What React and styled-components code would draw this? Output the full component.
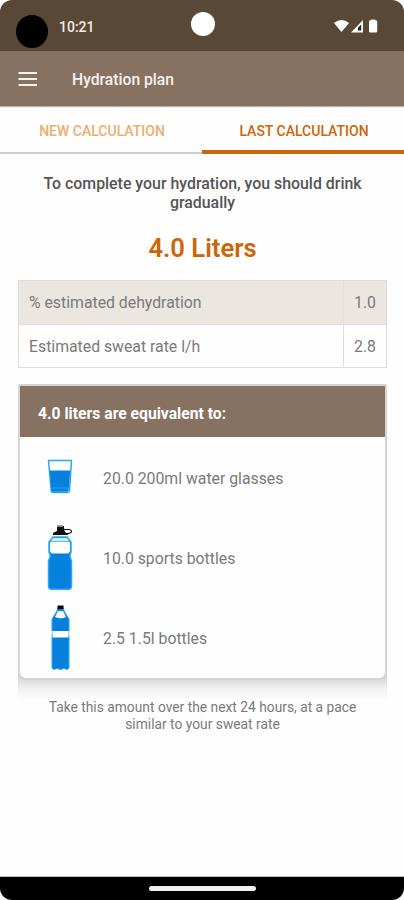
import React from "react";
import styled, { createGlobalStyle } from "styled-components";

const colors = {
  statusBar: "#5a4837",
  primary: "#877160",
  accent: "#cd6509",
  accentLight: "#edae6f",
  text: "#555555",
  textSecondary: "#7a7a7a",
  rowShade: "#ece6e1",
  border: "#dfdddd",
  water: "#0680dc",
  waterEdge: "#25aaf0",
};

const GlobalStyle = createGlobalStyle`
  * {
    box-sizing: border-box;
  }

  body {
    margin: 0;
    background: #ffffff;
    font-family: Roboto, "Liberation Sans", sans-serif;
  }
`;

const Screen = styled.div`
  width: 404px;
  height: 900px;
  display: flex;
  flex-direction: column;
  background: #fefefe;
  border-radius: 12px;
  overflow: hidden;
`;

const StatusBar = styled.div`
  height: 51px;
  flex-shrink: 0;
  display: grid;
  grid-template-columns: 1fr 24px 1fr;
  align-items: start;
  padding: 12px 25px 0 16px;
  background: ${colors.statusBar};
`;

const StatusLeft = styled.div`
  display: flex;
  align-items: flex-start;
  gap: 11px;
  padding-top: 3px;
`;

const Lens = styled.div`
  width: 32px;
  height: 33px;
  border-radius: 50%;
  background: #000000;
`;

const Clock = styled.span`
  color: #f3ebe4;
  font-size: 14px;
  font-weight: 500;
  line-height: 24px;
`;

const Camera = styled.div`
  width: 24px;
  height: 24px;
  margin-left: 5px;
  border-radius: 50%;
  background: #ffffff;
`;

const StatusIcons = styled.svg`
  width: 46px;
  height: 16px;
  margin-top: 6px;
  justify-self: end;
`;

const AppBar = styled.header`
  height: 55px;
  flex-shrink: 0;
  display: flex;
  align-items: center;
  gap: 34px;
  padding: 1px 18px 0;
  background: ${colors.primary};
  box-shadow: 0 1px 1px rgba(60, 40, 30, 0.35);
`;

const MenuIcon = styled.svg`
  width: 20px;
  height: 14px;
`;

const AppTitle = styled.h1`
  margin: 0;
  color: #f8f1ec;
  font-size: 15.7px;
  font-weight: 500;
`;

const Tabs = styled.nav`
  height: 48px;
  flex-shrink: 0;
  display: grid;
  grid-template-columns: 1fr 1fr;
`;

const Tab = styled.div`
  display: flex;
  align-items: center;
  justify-content: center;
  padding-top: ${(props) => (props.$active ? "5px" : "3px")};
  padding-left: 2px;
  color: ${(props) => (props.$active ? colors.accent : colors.accentLight)};
  border-bottom: ${(props) => (props.$active ? `4px solid ${colors.accent}` : "2px solid #cfcdcd")};
  font-size: 14px;
  font-weight: 500;
`;

const Content = styled.main`
  flex: 1;
  padding: 21px 17px 0 18px;
`;

const Intro = styled.p`
  margin: 0;
  color: ${colors.text};
  font-size: 15.9px;
  font-weight: 500;
  line-height: 18.5px;
  text-align: center;
`;

const Amount = styled.h2`
  margin: 21px 0 17px;
  color: ${colors.accent};
  font-size: 25.6px;
  font-weight: 600;
  line-height: 30px;
  text-align: center;
`;

const Table = styled.div`
  border: 1px solid ${colors.border};
`;

const TableRow = styled.div`
  height: 43px;
  display: grid;
  grid-template-columns: 1fr 43px;
  background: ${(props) => (props.$shaded ? colors.rowShade : "#fefefe")};

  & + & {
    border-top: 1px solid ${colors.border};
  }
`;

const Cell = styled.div`
  display: flex;
  align-items: center;
  padding-left: 10px;
  color: ${colors.textSecondary};
  font-size: 15.8px;

  & + & {
    border-left: 1px solid ${colors.border};
  }
`;

const Card = styled.section`
  height: 296px;
  margin-top: 16px;
  border: 2px solid #d6d4d4;
  border-radius: 2px 2px 8px 8px;
  background: #fefefe;
`;

const CardHeader = styled.div`
  height: 51px;
  display: flex;
  align-items: center;
  padding: 3px 0 0 18px;
  background: ${colors.primary};
  color: #ffffff;
  font-size: 15.7px;
  font-weight: 700;
`;

const DrinkRow = styled.div`
  height: 80px;
  display: grid;
  grid-template-columns: 80px 1fr;
  column-gap: 3px;
  align-items: center;
  color: ${colors.textSecondary};
  font-size: 15.8px;
`;

const DrinkLabel = styled.span`
  padding-top: 2px;
`;

const DrinkIcon = styled.svg`
  width: 40px;
  height: 70px;
  justify-self: center;
`;

// soft band that fades out under the card
const CardShadow = styled.div`
  height: 29px;
  margin-top: -8px;
  background: linear-gradient(#d2d2d2, #dcdcdc 28%, #f3f3f3 60%, #fefefe);
  position: relative;
  z-index: -1;
`;

const Body = styled.div`
  position: relative;
  z-index: 0;
`;

const Note = styled.p`
  margin: -2px 0 0;
  position: relative;
  color: ${colors.textSecondary};
  font-size: 13.8px;
  line-height: 16.5px;
  text-align: center;
`;

const NavBar = styled.footer`
  height: 23px;
  flex-shrink: 0;
  display: flex;
  justify-content: center;
  align-items: center;
  background: #000000;
  box-shadow: 0 -1px 0 #bdbdbd;
`;

const HomeHandle = styled.div`
  width: 107px;
  height: 5px;
  border-radius: 3px;
  background: #f2f2f2;
`;

const Glass = () => (
  <DrinkIcon viewBox="0 0 40 70">
    <path d="M8.5 18.5H31.5L29.5 49Q29.3 50.5 27.5 50.5H13.5Q11.5 50.5 11.2 49Z" fill="#ffffff" stroke={colors.waterEdge} strokeWidth="1.5" />
    <path d="M9.8 28.5H30.2L29 46Q20 48 11.2 46Z" fill={colors.water} />
    <path d="M11.2 45.5H28.9L28.3 49.7H11.9Z" fill={colors.water} />
    <path d="M11.5 46H28.7" fill="none" stroke="#2fa2ee" strokeWidth="0.8" />
  </DrinkIcon>
);

const SportsBottle = () => (
  <DrinkIcon viewBox="0 0 40 70">
    <path
      d="M13 15H27L31 20V30L29.8 34L31.5 39V64Q31.5 67.3 28 67.3H12Q8.5 67.3 8.5 64V39L10.5 34L9 30V20Z"
      fill={colors.water}
      stroke={colors.waterEdge}
      strokeWidth="1.5"
    />
    <path d="M10 20H30V29L28.5 31.5H11.5L10 29Z" fill="#ffffff" />
    <path d="M13 16H27L29.5 19.5H10.5Z" fill="#c9ecfc" />
    <path d="M17 4H24V8L26 11H28V13H13V11L17 9Z" fill="#111111" />
    <path d="M17 3.2H23V5H17Z" fill="#888888" />
    <path d="M24 7.5H29Q32.5 8 31 10.5L27 12" fill="none" stroke="#111111" strokeWidth="1.2" />
  </DrinkIcon>
);

const LargeBottle = () => (
  <DrinkIcon viewBox="0 0 40 70">
    <path
      d="M17.5 6H23.5L24 9L29 17V28.5L28.5 31L29 34V66L27.3 67.5L24 66.5L20.5 67.5L17 66.5L13.5 67.5L12 66V34L12.5 31L12 28V17L17 9Z"
      fill={colors.water}
      stroke={colors.waterEdge}
      strokeWidth="1"
    />
    <path d="M18 9H23L26 15Q20.5 17.5 15 15Z" fill="#ffffff" />
    <path d="M12.5 29H28.5V35.5H12.5Z" fill="#ffffff" />
    <path d="M17.5 3.5H23.5V7H17.5Z" fill="#050505" />
  </DrinkIcon>
);

const App = () => {
  const rows = [
    { label: "% estimated dehydration", value: "1.0" },
    { label: "Estimated sweat rate l/h", value: "2.8" },
  ];

  const drinks = [
    { icon: <Glass />, label: "20.0 200ml water glasses" },
    { icon: <SportsBottle />, label: "10.0 sports bottles" },
    { icon: <LargeBottle />, label: "2.5 1.5l bottles" },
  ];

  return (
    <>
      <GlobalStyle />
      <Screen>
        <StatusBar>
          <StatusLeft>
            <Lens />
            <Clock>10:21</Clock>
          </StatusLeft>
          <Camera />
          <StatusIcons viewBox="0 0 46 16">
            <path d="M1 5Q8.5-1 16 5L8.5 14Z" fill="#ffffff" />
            <path d="M18 14.5L30 2V14.5Z" fill="#ffffff" />
            <path d="M25 9.7L28.2 6.5V12.5H25Z" fill="#2b1c16" />
            <path d="M36 3.5Q36 2.3 37.4 2.3H38.3V1.5H42V2.3H42.8Q44.2 2.3 44.2 3.5V13Q44.2 14.5 42.8 14.5H37.4Q36 14.5 36 13Z" fill="#ffffff" />
          </StatusIcons>
        </StatusBar>

        <AppBar>
          <MenuIcon viewBox="0 0 20 14">
            <path d="M0.5 1H19M0.5 7H19M0.5 13H19" stroke="#f8f1ec" strokeWidth="2" />
          </MenuIcon>
          <AppTitle>Hydration plan</AppTitle>
        </AppBar>

        <Tabs>
          <Tab>NEW CALCULATION</Tab>
          <Tab $active>LAST CALCULATION</Tab>
        </Tabs>

        <Content>
          <Intro>
            To complete your hydration, you should drink
            <br />
            gradually
          </Intro>
          <Amount>4.0 Liters</Amount>

          <Table>
            {rows.map((row, index) => (
              <TableRow key={row.label} $shaded={index === 0}>
                <Cell>{row.label}</Cell>
                <Cell>{row.value}</Cell>
              </TableRow>
            ))}
          </Table>

          <Body>
            <Card>
              <CardHeader>4.0 liters are equivalent to:</CardHeader>
              {drinks.map((drink) => (
                <DrinkRow key={drink.label}>
                  {drink.icon}
                  <DrinkLabel>{drink.label}</DrinkLabel>
                </DrinkRow>
              ))}
            </Card>
            <CardShadow />
          </Body>

          <Note>
            Take this amount over the next 24 hours, at a pace
            <br />
            similar to your sweat rate
          </Note>
        </Content>

        <NavBar>
          <HomeHandle />
        </NavBar>
      </Screen>
    </>
  );
};

export default App;
